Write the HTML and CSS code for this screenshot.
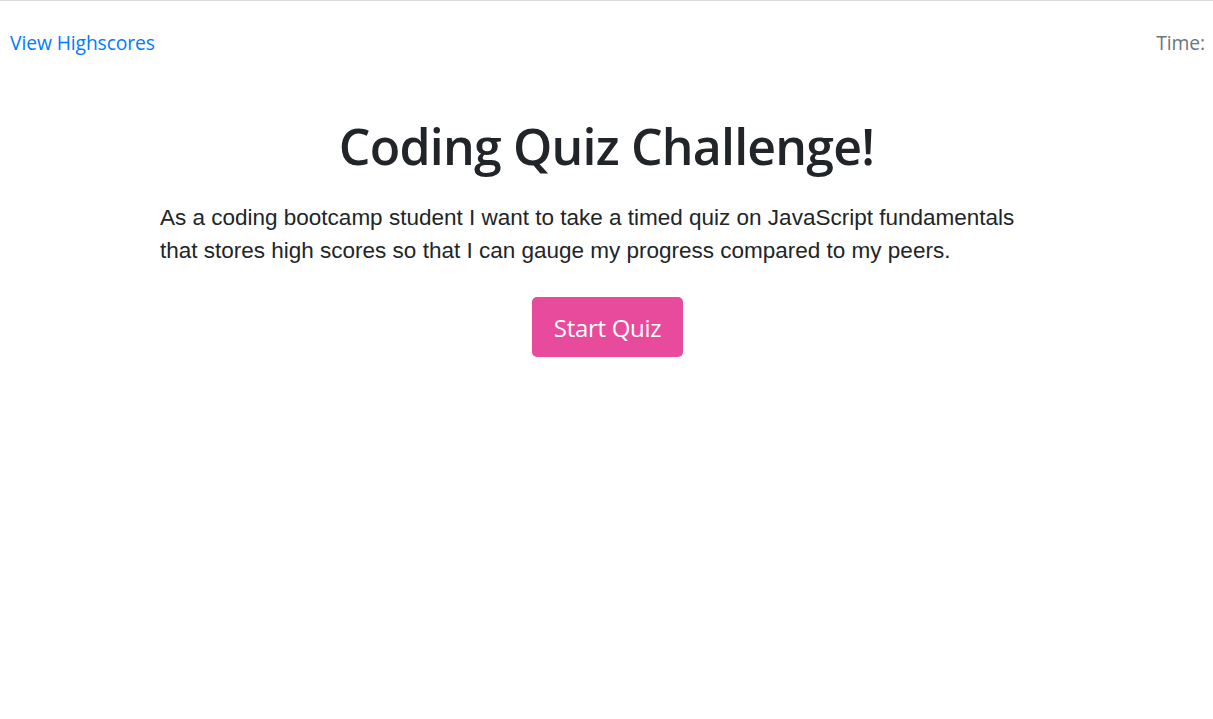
FILE: index.html
```html
<!DOCTYPE html>
<html lang="en">
<head>
<meta charset="utf-8">
<title>Coding Quiz</title>
<link rel="stylesheet" href="styles.css">
</head>
<body>
<header class="topbar">
  <a class="highscores" href="#">View Highscores</a>
  <div class="timer">Time: <span class="time-value"></span></div>
</header>
<main class="intro">
  <h1 class="title">Coding Quiz Challenge!</h1>
  <p class="lead">As a coding bootcamp student I want to take a timed quiz on JavaScript fundamentals that stores high scores so that I can gauge my progress compared to my peers.</p>
  <div class="actions">
    <button class="start-btn" type="button">Start Quiz</button>
  </div>
</main>
</body>
</html>
```
FILE: styles.css
```css
html, body {
  margin: 0;
  padding: 0;
  background: #fff;
}
body {
  border-top: 1px solid #dcdcdc;
  font-family: "Open Sans", "Noto Sans", sans-serif;
  color: #212529;
}
.topbar {
  display: flex;
  justify-content: space-between;
  align-items: center;
  padding: 29px 8px 0 10px;
  height: 24px;
}
.highscores {
  color: #007bff;
  text-decoration: none;
  font-size: 19.3px;
  letter-spacing: -0.1px;
}
.timer {
  color: #6c757d;
  font-size: 19.3px;
  letter-spacing: -0.1px;
}
.intro {
  max-width: 893px;
  margin: 0 auto;
  display: flex;
  flex-direction: column;
  align-items: stretch;
}
.title {
  margin: 62px 0 0;
  text-align: center;
  font-size: 50px;
  font-weight: 600;
  letter-spacing: -0.8px;
  line-height: 60px;
}
.lead {
  margin: 25px 0 0;
  font-family: "Liberation Sans", Arial, sans-serif;
  font-size: 22.5px;
  line-height: 33px;
  color: #212529;
}
.actions {
  display: flex;
  justify-content: center;
  margin-top: 30px;
  padding-left: 2px;
}
.start-btn {
  background: #e84a9c;
  color: #fff;
  border: none;
  border-radius: 5px;
  width: 151px;
  height: 60px;
  font-family: "Open Sans", "Noto Sans", sans-serif;
  font-size: 24px;
  letter-spacing: -0.3px;
  padding: 0;
  cursor: pointer;
}
```
